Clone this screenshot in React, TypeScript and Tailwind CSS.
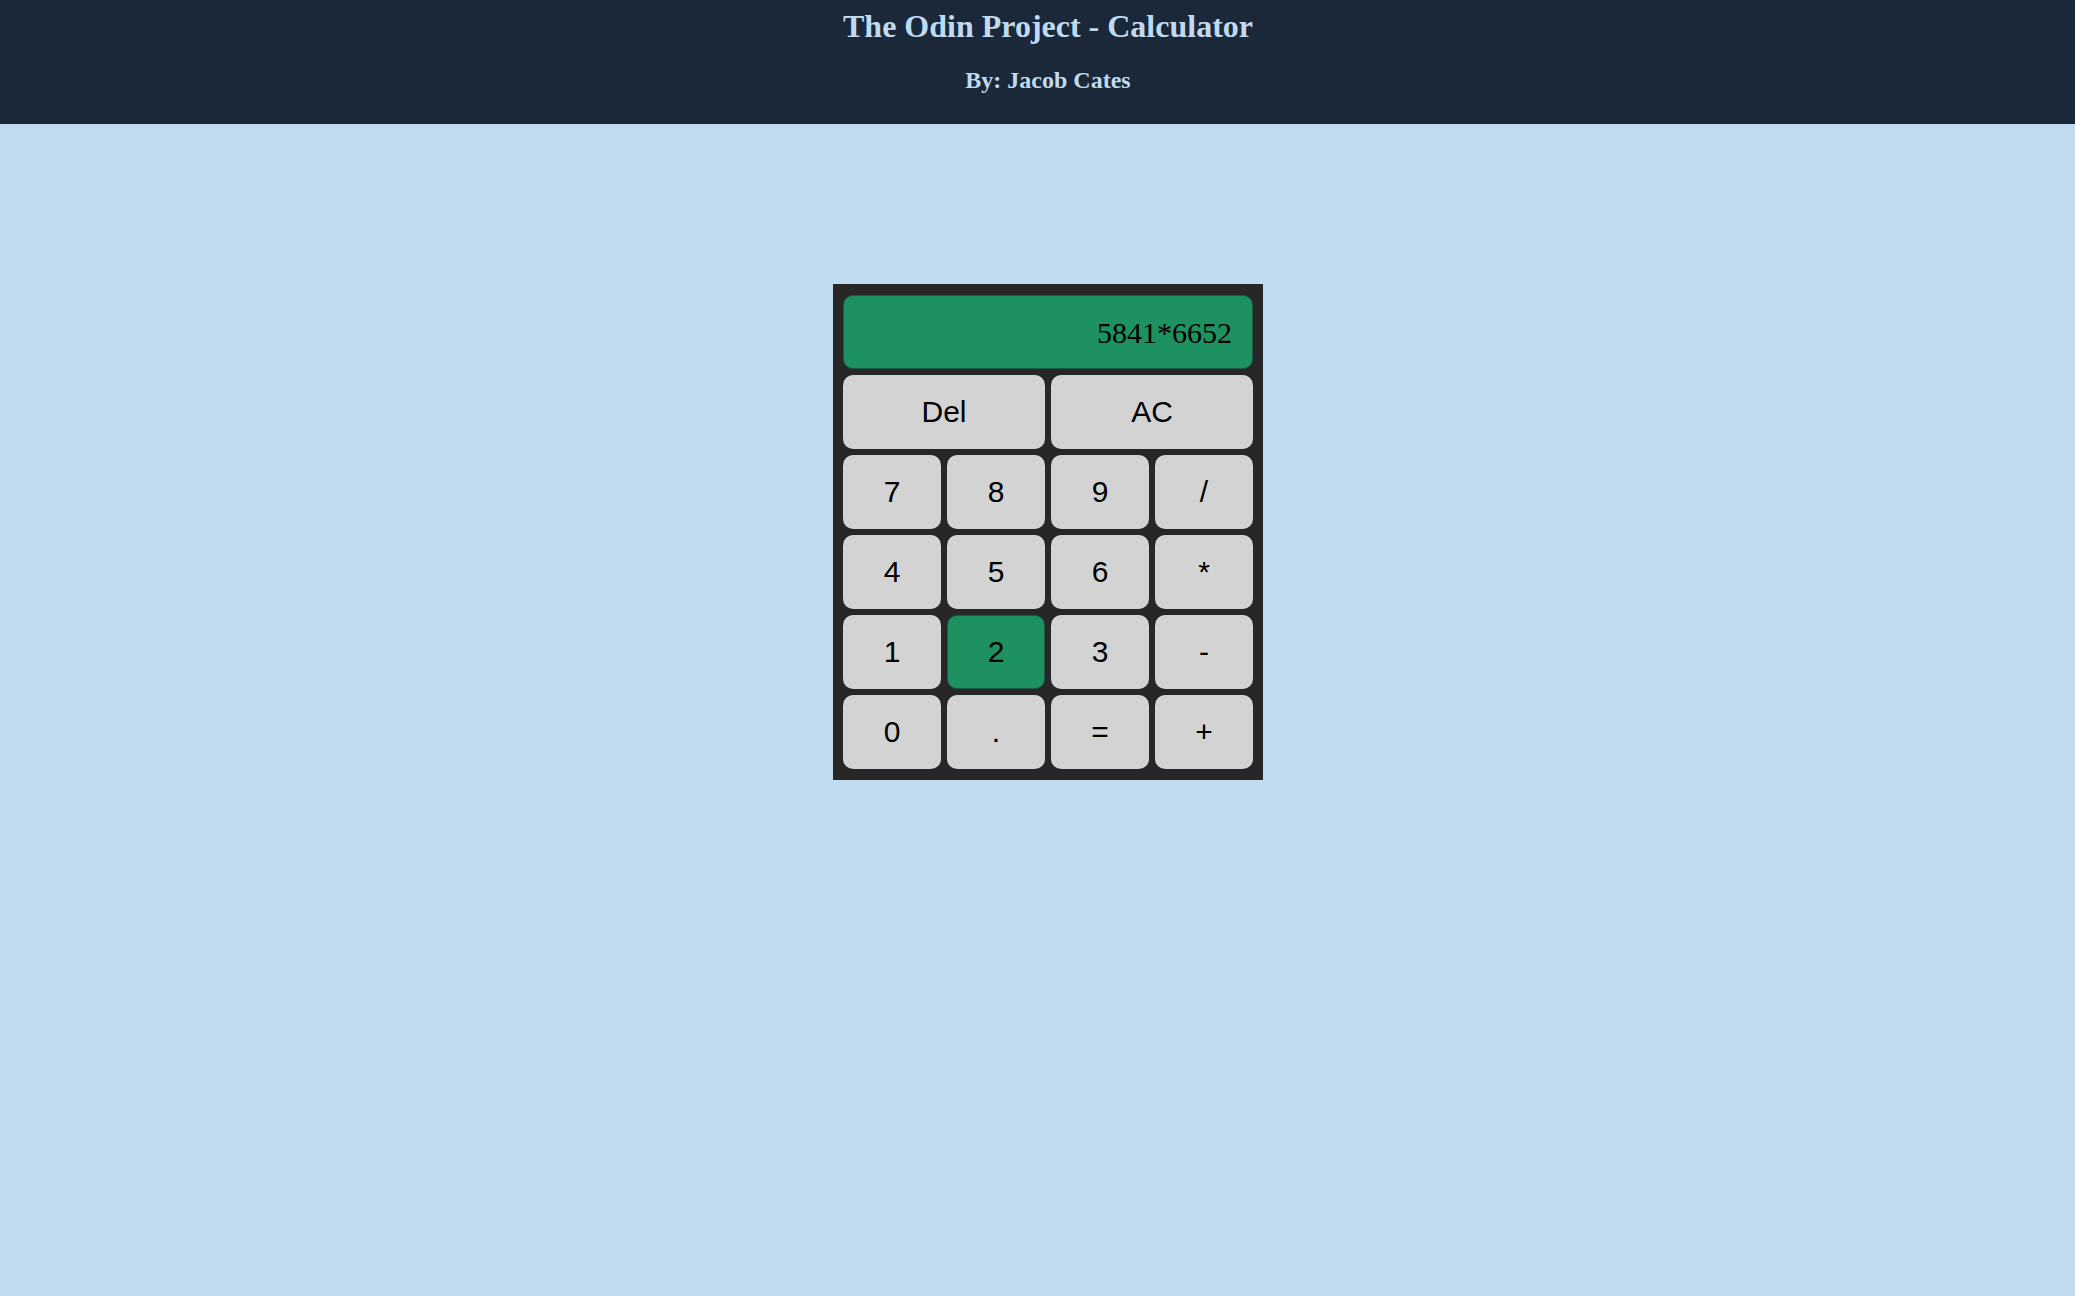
const rows = [
  ["7", "8", "9", "/"],
  ["4", "5", "6", "*"],
  ["1", "2", "3", "-"],
  ["0", ".", "=", "+"],
]

export default function App() {
  return (
    <div className="min-h-screen bg-[#c0dbf0]">
      <header className="bg-[#1b2839] h-[124px] pl-[21px] flex flex-col items-center font-['Liberation_Serif',serif] font-bold text-[#c0dbf0]">
        <h1 className="text-[32px] leading-none mt-[10px]">The Odin Project - Calculator</h1>
        <h3 className="text-[24px] leading-none mt-[26px]">By: Jacob Cates</h3>
      </header>

      <main className="pl-[21px] pt-[160px] flex justify-center">
        <div className="bg-[#272727] w-[430px] px-[10px] py-[11px] flex flex-col gap-[6px]">
          <div className="h-[74px] rounded-[10px] bg-[#1e9160] border border-[#1a5c40] flex items-center justify-end pr-[20px] font-['Liberation_Serif',serif] text-[30px] text-black">
            5841*6652
          </div>
          <div className="grid grid-cols-2 gap-[6px]">
            {["Del", "AC"].map((label) => (
              <button
                key={label}
                className="h-[74px] pb-[2px] rounded-[10px] bg-[#d3d3d3] font-['Liberation_Sans',sans-serif] text-[30px] text-black"
              >
                {label}
              </button>
            ))}
          </div>
          {rows.map((row, i) => (
            <div key={i} className="grid grid-cols-4 gap-[6px]">
              {row.map((key) => (
                <button
                  key={key}
                  className={`h-[74px] pb-[2px] rounded-[10px] font-['Liberation_Sans',sans-serif] text-[30px] text-black ${
                    key === "2" ? "bg-[#1e9160] border border-[#1a5c40]" : "bg-[#d3d3d3]"
                  }`}
                >
                  {key}
                </button>
              ))}
            </div>
          ))}
        </div>
      </main>
    </div>
  )
}
